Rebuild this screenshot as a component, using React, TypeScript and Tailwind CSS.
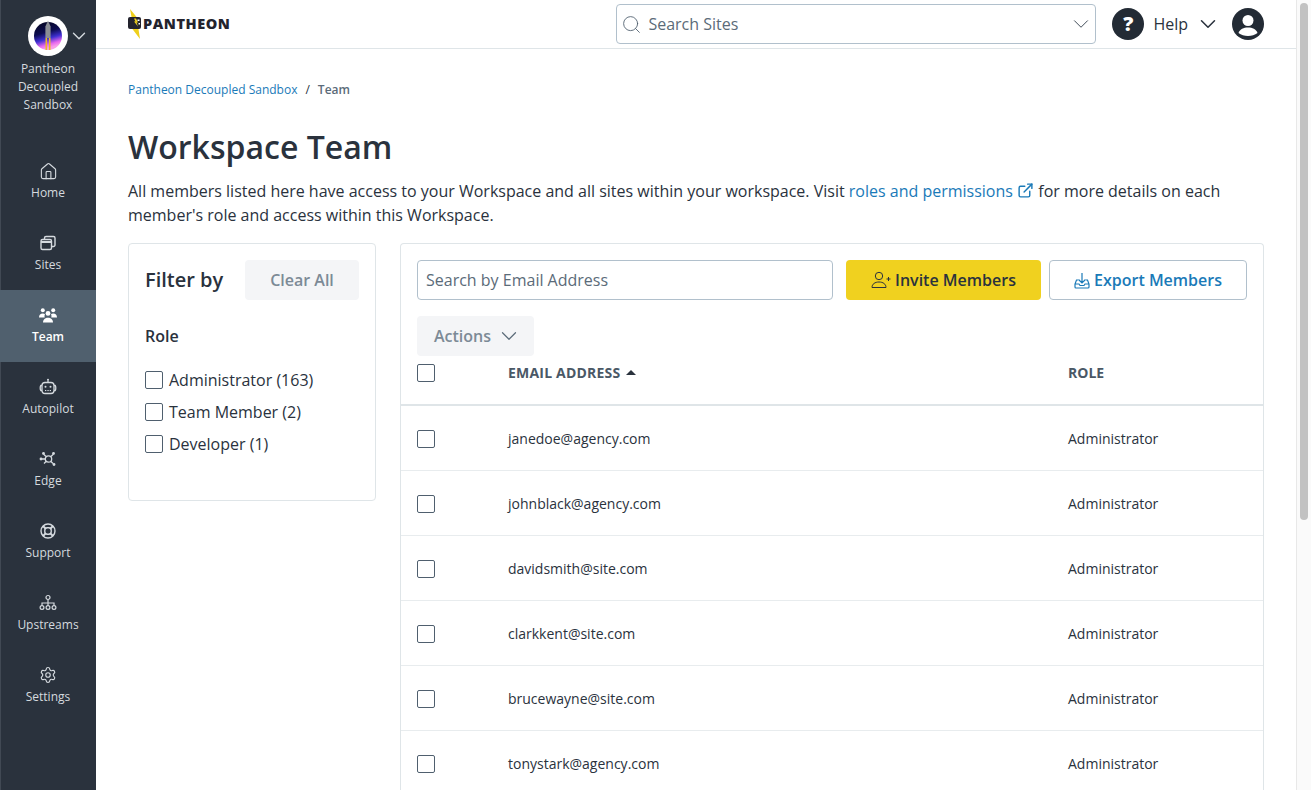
import { ChevronDown, ExternalLink, Search, Home, Settings } from "lucide-react";

const NavIcon = ({ name }: { name: string }) => {
  const cls = "h-[18px] w-[18px]";
  if (name === "Home")
    return (
      <span className="flex h-[18px] w-[18px] items-center justify-center">
        <Home className="h-[19px] w-[19px] shrink-0" strokeWidth={1.4} />
      </span>
    );
  if (name === "Sites")
    return (
      <svg className={cls} viewBox="0 0 18 18" fill="none" stroke="currentColor" strokeWidth="1.4">
        <rect x="2" y="5.5" width="10.5" height="10" rx="1.5" />
        <path d="M2 8h10.5" strokeWidth="2" />
        <path d="M5.5 5.5V4a1.5 1.5 0 0 1 1.5-1.5h7.5A1.5 1.5 0 0 1 16 4v7a1.5 1.5 0 0 1-1.5 1.5h-2" />
      </svg>
    );
  if (name === "Team")
    return (
      <svg className={cls} viewBox="0 0 18 18" fill="currentColor">
        <circle cx="3.800" cy="4.200" r="2" />
        <circle cx="14.200" cy="4.200" r="2" />
        <circle cx="9" cy="7.400" r="2.400" />
        <path d="M0 11.500c0-2.400 1.500-4 3.800-4 1 0 1.700.3 2.200.8-.5.8-.6 2-.3 3.200H0zM18 11.500c0-2.400-1.500-4-3.800-4-1 0-1.700.3-2.200.8.500.8.600 2 .3 3.200H18z" />
        <path d="M4 16.500c0-3 2.200-4.800 5-4.800s5 1.800 5 4.800z" />
      </svg>
    );
  if (name === "Autopilot")
    return (
      <svg className={cls} viewBox="0 0 18 18" fill="none" stroke="currentColor" strokeWidth="1.300">
        <rect x="3" y="4.500" width="12" height="11" rx="3" />
        <path d="M3 7.500H1.800C1 8.500 1 11.500 1.800 12.500H3M15 7.500h1.200c.8 1 .8 4 0 5H15M9 4.500V2.500" />
        <circle cx="9" cy="1.800" r="1" fill="currentColor" stroke="none" />
        <g fill="currentColor" stroke="none">
          <circle cx="6.500" cy="8.800" r="1" />
          <circle cx="11.500" cy="8.800" r="1" />
          <rect x="6" y="12" width="1.300" height="1.100" />
          <rect x="8.400" y="12" width="1.300" height="1.100" />
          <rect x="10.700" y="12" width="1.300" height="1.100" />
        </g>
      </svg>
    );
  if (name === "Edge")
    return (
      <svg className={cls} viewBox="0 0 18 18" fill="none" stroke="currentColor" strokeWidth="1.3">
        <circle cx="9.500" cy="9" r="3.200" />
        <path d="M7 6.500 5 4.500M12 6.500l2-2M12 11.500l2 2M7 11.500l-2 2M6.300 9H3" />
        <g fill="currentColor" stroke="none">
          <circle cx="4.500" cy="3.500" r="1.400" />
          <circle cx="14.500" cy="3.500" r="1.400" />
          <circle cx="15" cy="14.500" r="1.400" />
          <circle cx="2" cy="9" r="1.400" />
        </g>
      </svg>
    );
  if (name === "Support")
    return (
      <svg className={cls} viewBox="0 0 18 18" fill="none" stroke="currentColor" strokeWidth="1.4">
        <circle cx="9" cy="9" r="7" />
        <rect x="5.800" y="5.800" width="6.400" height="6.400" rx="2.400" />
        <path d="m4 4 2.900 2.900M14 4l-2.900 2.900M14 14l-2.900-2.900M4 14l2.900-2.900" strokeWidth="2" />
      </svg>
    );
  if (name === "Upstreams")
    return (
      <svg className={cls} viewBox="0 0 18 18" fill="none" stroke="currentColor" strokeWidth="1.2">
        <circle cx="9" cy="3.500" r="2" />
        <path d="M9 5.500V9M3 11.500V9h12v2.500M9 9v2.500" />
        <circle cx="3" cy="13.500" r="1.900" />
        <circle cx="9" cy="13.500" r="1.900" />
        <circle cx="15" cy="13.500" r="1.900" />
      </svg>
    );
  return <Settings className={cls} strokeWidth={1.5} />;
};

const navItems = ["Home", "Sites", "Team", "Autopilot", "Edge", "Support", "Upstreams", "Settings"];

const members = [
  "janedoe@agency.com",
  "johnblack@agency.com",
  "davidsmith@site.com",
  "clarkkent@site.com",
  "brucewayne@site.com",
  "tonystark@agency.com",
];

const roles = ["Administrator (163)", "Team Member (2)", "Developer (1)"];

const Checkbox = () => (
  <span className="block h-[18px] w-[18px] shrink-0 rounded-[2px] border border-[#4f5f6e] bg-white" />
);

const Sidebar = () => (
  <aside className="flex h-[790px] w-[96px] shrink-0 flex-col bg-[#2a323d] text-[#d5dadf] shadow-[inset_1px_0_0_#414954]">
    <div className="flex h-[146px] flex-col items-center pt-4">
      <div className="relative h-[40px] w-[40px]">
        <svg className="h-[40px] w-[40px]" viewBox="0 0 40 40">
          <defs>
            <linearGradient id="disc" x1="0" y1="0" x2="0.3" y2="1">
              <stop offset="0" stopColor="#05051a" />
              <stop offset="0.45" stopColor="#0c0c50" />
              <stop offset="0.68" stopColor="#3d2fd0" />
              <stop offset="0.88" stopColor="#e868ee" />
              <stop offset="1" stopColor="#f8a0e8" />
            </linearGradient>
          </defs>
          <circle cx="20" cy="20" r="20" fill="#fff" />
          <circle cx="20" cy="20" r="14" fill="url(#disc)" />
          <path d="M20 4.500l2.600 6V22h-5.200V10.500z" fill="#8a8d94" />
          <path d="M17.500 22h1.600v12h-1.600zM20.900 22h1.600v12h-1.600z" fill="#eab825" />
        </svg>
        <ChevronDown className="absolute left-[40px] top-[9px] h-[22px] w-[22px] text-[#d5dadf]" strokeWidth={1.5} />
      </div>
      <div className="mt-[4px] text-center text-[12px] leading-[18px]">
        Pantheon
        <br />
        Decoupled
        <br />
        Sandbox
      </div>
    </div>
    <nav className="flex flex-col">
      {navItems.map((item) => (
        <div
          key={item}
          className={
            item === "Team"
              ? "flex h-[72px] flex-col items-center bg-[#50606e] pt-[16px] font-semibold text-white"
              : "flex h-[72px] flex-col items-center pt-[16px]"
          }
        >
          <NavIcon name={item} />
          <span className="mt-[4px] text-[12px] leading-[18px]">{item}</span>
        </div>
      ))}
    </nav>
  </aside>
);

const TopBar = () => (
  <header className="flex h-[49px] shrink-0 items-center justify-between border-b border-[#dfe5e8] pl-8 pr-[32px]">
    <div className="flex items-center">
      <svg className="h-[30px] w-[14px]" viewBox="0 0 14 30">
        <path d="M2 0l7 8.500h-2l5 8-2 .5 2 13-8-10.500 1-1.500-4-7.500h3z" fill="#efd01b" />
        <rect x="0" y="8" width="13" height="12" rx="2" fill="#23232d" />
        <path d="M6 9.500h2l2 4H8.500l1.500 4-4-5h1.500z" fill="#efd01b" />
        <path d="M9.500 10.500h2v1.500h-2zM10.500 14h1.500v1.500h-1.500z" fill="#fff" />
      </svg>
      <span className="ml-[1px] text-[14.500px] font-extrabold leading-none tracking-[0.55px] text-[#23232d]">PANTHEON</span>
    </div>
    <div className="flex items-center">
      <div className="mr-4 flex h-[40px] w-[480px] items-center rounded-[4px] border border-[#b1c0cc] pl-[4px] pr-[1px]">
        <Search className="h-[21px] w-[21px] text-[#4f5f6e]" strokeWidth={1} />
        <span className="ml-[6px] flex-1 text-[16px] text-[#5b6b79]">Search Sites</span>
        <ChevronDown className="h-[26px] w-[26px] text-[#3c4753]" strokeWidth={0.9} />
      </div>
      <span className="flex h-[32px] w-[32px] items-center justify-center rounded-full bg-[#232b35] text-[20px] font-extrabold text-white">
        ?
      </span>
      <span className="ml-[9px] text-[16px] font-medium text-[#2a323d]">Help</span>
      <ChevronDown className="ml-[7px] h-[26px] w-[26px] text-[#2a323d]" strokeWidth={1.4} />
      <svg className="ml-[11px] h-[32px] w-[32px]" viewBox="0 0 32 32">
        <circle cx="16" cy="16" r="16" fill="#232b35" />
        <circle cx="16" cy="12.500" r="5.500" fill="#fff" />
        <path d="M6.500 25c1.500-4 5-5.500 9.500-5.500s8 1.500 9.500 5.500c-2.500 2-6 3-9.500 3s-7-1-9.500-3z" fill="#fff" />
      </svg>
    </div>
  </header>
);

const FilterPanel = () => (
  <section className="h-[258px] w-[248px] shrink-0 rounded-[4px] border border-[#dfe5e8] px-4 pt-4">
    <div className="flex items-center justify-between">
      <h2 className="text-[20px] font-semibold text-[#2a323d]">Filter by</h2>
      <button className="flex h-[40px] w-[114px] items-center justify-center rounded-[4px] bg-[#f4f5f7] text-[16px] font-semibold text-[#7c8a96]">
        Clear All
      </button>
    </div>
    <h3 className="mt-[24px] text-[16px] leading-[24px] font-semibold text-[#2a323d]">Role</h3>
    <ul className="mt-[20px] flex flex-col gap-[8px]">
      {roles.map((role) => (
        <li key={role} className="flex h-[24px] items-center gap-[6px] text-[16px] text-[#2a323d]">
          <Checkbox />
          {role}
        </li>
      ))}
    </ul>
  </section>
);

const MembersPanel = () => (
  <section className="flex-1 rounded-t-[4px] border border-b-0 border-[#dfe5e8]">
    <div className="px-4 pt-4">
      <div className="flex items-center">
        <div className="flex h-[40px] w-[416px] items-center rounded-[4px] border border-[#b1c0cc] px-2 text-[16px] text-[#5b6b79]">
          Search by Email Address
        </div>
        <button className="ml-[13px] flex h-[40px] w-[195px] items-center justify-center gap-[3px] rounded-[4px] bg-[#f0d11f] text-[16px] font-semibold text-[#2a323d]">
          <svg className="h-[18px] w-[21px]" viewBox="0 0 21 18" fill="none" stroke="currentColor" strokeWidth="1">
            <circle cx="8" cy="5" r="3.700" />
            <path d="M1 16.500c0-3.500 3-5.500 7-5.500s7 2 7 5.500zM17.500 6v4M15.500 8h4" />
          </svg>
          Invite Members
        </button>
        <button className="ml-[8px] flex h-[40px] w-[198px] items-center justify-center gap-[4px] rounded-[4px] border border-[#b1c0cc] text-[16px] font-semibold text-[#1a7ab8]">
          <svg className="h-[17px] w-[16px]" viewBox="0 0 16 17" fill="none" stroke="currentColor" strokeWidth="1.200">
            <path d="M8 1v10M4.500 7.500 8 11l3.500-3.500M4 8H2.500L1 12v3a1 1 0 0 0 1 1h12a1 1 0 0 0 1-1v-3l-1.500-4H12M1 12h4l1 1.500h4l1-1.500h4" />
          </svg>
          Export Members
        </button>
      </div>
      <button className="mt-4 flex h-[40px] w-[117px] items-center gap-[5px] rounded-[4px] bg-[#f4f5f7] pl-[17px] text-[16px] font-semibold text-[#7c8a96]">
        Actions
        <ChevronDown className="h-[26px] w-[26px] text-[#5b6b79]" strokeWidth={1.1} />
      </button>
    </div>
    <div className="flex h-[50px] items-start border-b-2 border-[#dfe5e8] pt-[8px] pl-4">
      <Checkbox />
      <div className="ml-[73px] flex w-[560px] items-center pt-[1px] text-[14px] leading-[16px] font-bold tracking-[0.2px] text-[#4a5866] uppercase">
        Email Address
        <span className="mb-[2px] ml-[6px] h-0 w-0 border-x-[5px] border-b-[5px] border-x-transparent border-b-[#2a323d]" />
      </div>
      <div className="pt-[1px] text-[14px] leading-[16px] font-bold text-[#4a5866] uppercase">Role</div>
    </div>
    {members.map((email) => (
      <div key={email} className="flex h-[65px] shrink-0 items-center border-b border-[#e8ecee] pl-4 text-[14px] text-[#2a323d]">
        <span className="mt-[2px]">
          <Checkbox />
        </span>
        <div className="ml-[73px] w-[560px]">{email}</div>
        <div>Administrator</div>
      </div>
    ))}
  </section>
);

export default function App() {
  return (
    <div className="flex h-[790px] w-[1311px] overflow-hidden bg-white font-['Open_Sans',sans-serif]">
      <Sidebar />
      <div className="flex h-[790px] min-w-0 flex-1 flex-col">
        <TopBar />
        <main className="min-h-0 flex-1 overflow-hidden px-8">
          <div className="mt-[32px] flex items-center text-[12px] leading-[18px]">
            <span className="text-[#1a7ab8]">Pantheon Decoupled Sandbox</span>
            <span className="mx-[8px] text-[#2a323d]">/</span>
            <span className="font-semibold text-[#5b6b79]">Team</span>
          </div>
          <h1 className="mt-[26px] text-[32px] leading-[44px] font-semibold text-[#2a323d]">Workspace Team</h1>
          <p className="mt-[10px] text-[16px] leading-[24px] text-[#2a323d]">
            All members listed here have access to your Workspace and all sites within your workspace. Visit{" "}
            <span className="text-[#1a7ab8]">
              roles and permissions <ExternalLink className="inline h-[17px] w-[17px] align-[-2px]" strokeWidth={2} />
            </span>{" "}
            for more details on each member's role and access within this Workspace.
          </p>
          <div className="mt-[16px] flex items-start gap-[24px]">
            <FilterPanel />
            <MembersPanel />
          </div>
        </main>
      </div>
      <div className="flex h-[790px] w-[15px] shrink-0 justify-center border-l border-[#e8e8e8] bg-[#fafafa] pt-[3px]">
        <div className="h-[517px] w-[8px] rounded-full bg-[#c2c2c2]" />
      </div>
    </div>
  );
}
